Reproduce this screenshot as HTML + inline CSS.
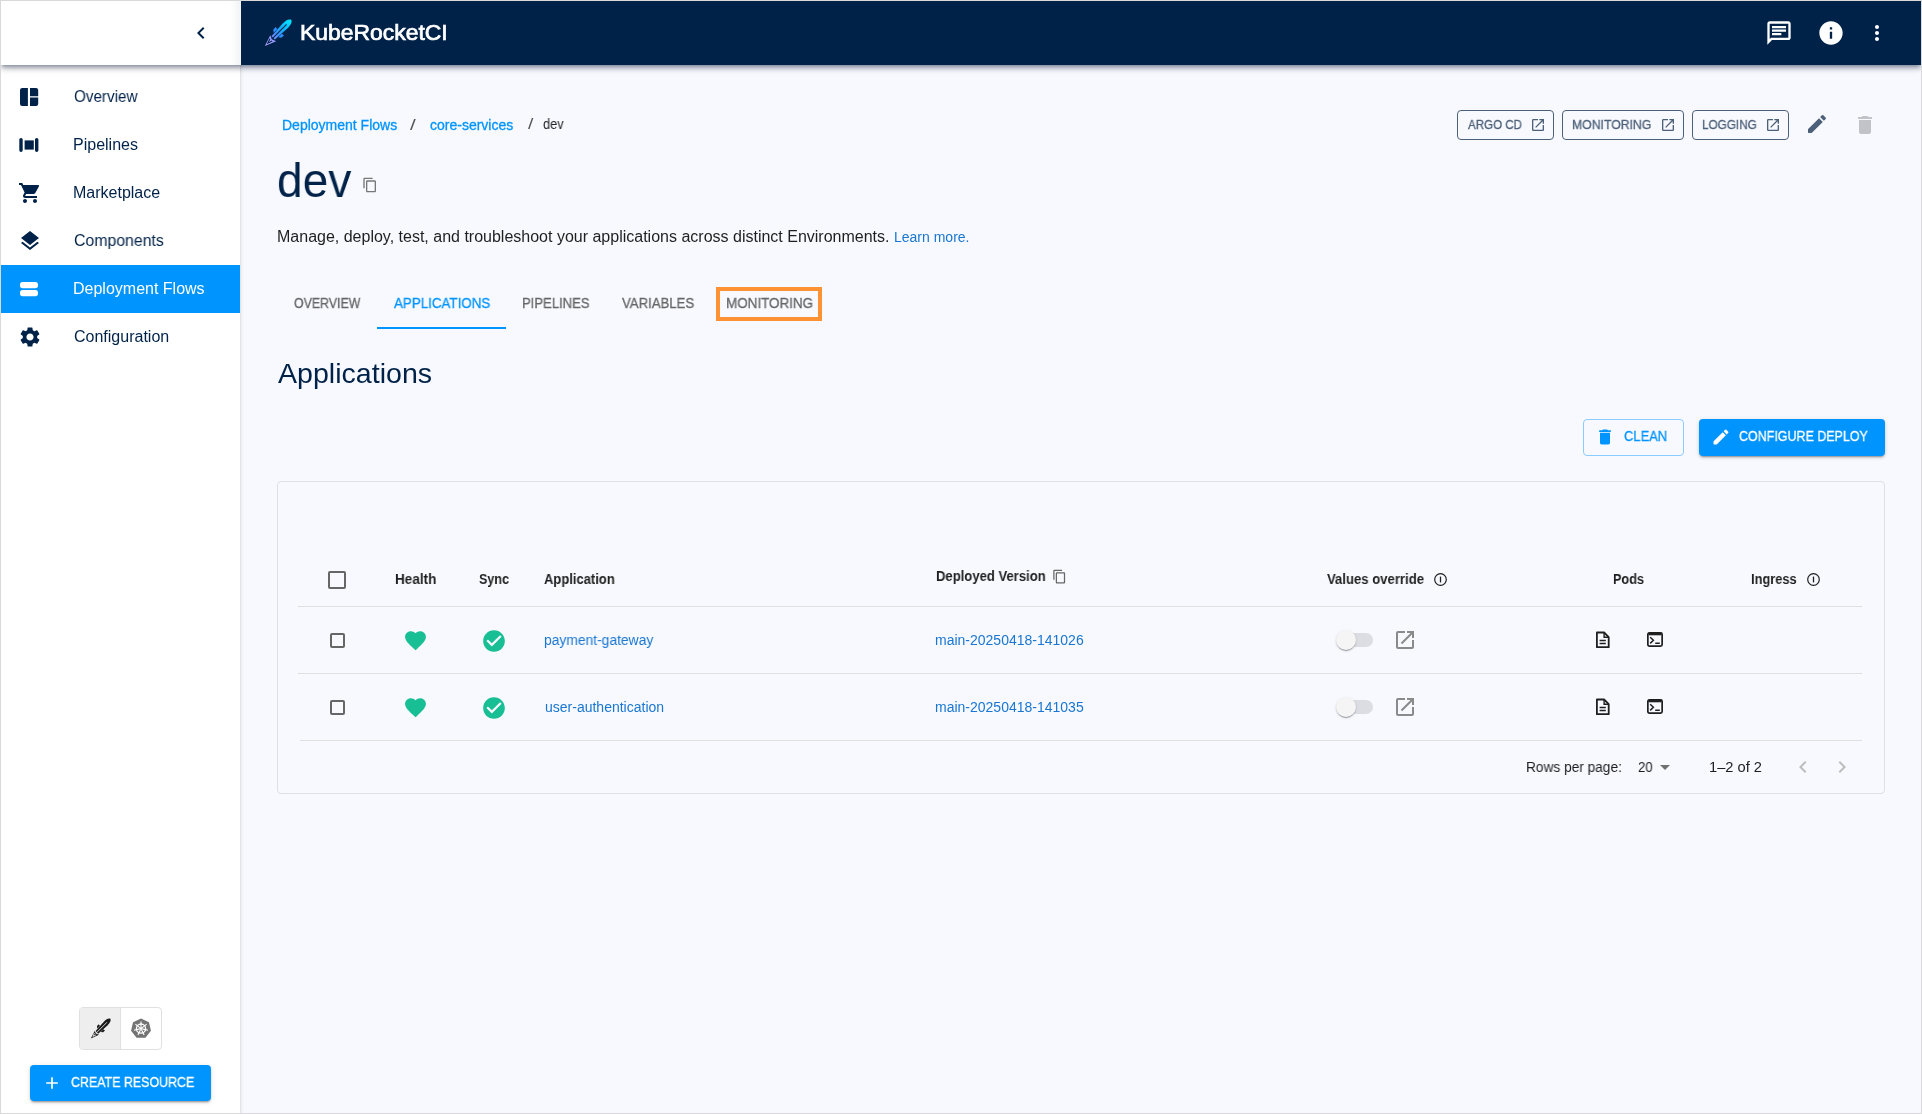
<!DOCTYPE html>
<html><head><meta charset="utf-8"><title>KubeRocketCI - dev</title>
<style>*{box-sizing:border-box;margin:0;padding:0}html,body{width:1922px;height:1114px;overflow:hidden}body{position:relative;background:#f7f9fe;font-family:"Liberation Sans",sans-serif;color:#1f1f1f}.a{position:absolute}svg{display:block}.t{position:absolute;white-space:nowrap;line-height:1;transform-origin:0 0;will-change:transform}</style></head>
<body>
<div class="a" style="left:1px;top:1px;width:1920px;height:64px;background:#012248;box-shadow:0 2px 4px -1px rgba(1,20,50,.35),0 4px 5px 0 rgba(1,20,50,.2),0 1px 10px 0 rgba(1,20,50,.14);z-index:1"></div>
<div class="a" style="left:1px;top:1px;width:240px;height:1112px;background:#fff;border-right:1px solid #e3e4e6;box-shadow:1px 0 3px rgba(0,0,0,.06)"></div>
<div class="a" style="left:1px;top:1px;width:240px;height:64px;background:linear-gradient(to right,#fff 229px,#f3f4f7 239px);z-index:2"></div>
<div class="a" style="left:189px;top:21px;z-index:3"><svg width="24" height="24" viewBox="0 0 24 24"><path fill="#012248" d="M15.41 7.41L14 6l-6 6 6 6 1.41-1.41L10.83 12z"/></svg></div>
<div class="a" style="left:260px;top:16px;z-index:3"><svg width="36" height="34" viewBox="0 0 36 34"><defs><linearGradient id="rb" gradientUnits="userSpaceOnUse" x1="-13" y1="0" x2="13" y2="0"><stop offset="0" stop-color="#7f8cff"/><stop offset=".25" stop-color="#3a92ff"/><stop offset=".55" stop-color="#0db6ff"/><stop offset="1" stop-color="#00eaff"/></linearGradient><linearGradient id="rt" gradientUnits="userSpaceOnUse" x1="-24" y1="0" x2="-13" y2="0"><stop offset="0" stop-color="#b9a3ff"/><stop offset="1" stop-color="#8f98ff"/></linearGradient></defs><g transform="translate(22,13) rotate(-45)"><path fill="url(#rb)" d="M13 0C12 -2.6 9 -3.4 4 -3.4L-12.5 -2.4 -12.5 2.4 4 3.4C9 3.4 12 2.6 13 0Z"/><path fill="#2f8cff" d="M-8.5 -3.2L-6.5 -5.8 -3 -5.8 -3.5 -3.2ZM-8.5 3.2L-6.5 5.8 -3 5.8 -3.5 3.2Z"/><path fill="url(#rt)" d="M-12.8 -3.8L-24.2 0 -12.8 4.6 -14.4 0Z"/><path fill="none" stroke="#012248" stroke-width="1.1" d="M6.5 0L-13 0M-15.5 -1.6L-20 0 -15.5 1.6"/></g></svg></div>
<div class="a" style="left:1765px;top:19px;z-index:3"><svg width="28" height="28" viewBox="0 0 24 24"><path fill="#fff" d="M20 2H4c-1.1 0-1.99.9-1.99 2L2 22l4-4h14c1.1 0 2-.9 2-2V4c0-1.1-.9-2-2-2zm0 14H5.17L4 17.17V4h16v12zM6 12h8v2H6zm0-3h12v2H6zm0-3h12v2H6z"/></svg></div>
<div class="a" style="left:1817px;top:19px;z-index:3"><svg width="28" height="28" viewBox="0 0 24 24"><path fill="#fff" d="M12 2C6.48 2 2 6.48 2 12s4.48 10 10 10 10-4.48 10-10S17.52 2 12 2zm1 15h-2v-6h2v6zm0-8h-2V7h2v2z"/></svg></div>
<div class="a" style="left:1865px;top:21px;z-index:3"><svg width="24" height="24" viewBox="0 0 24 24"><path fill="#fff" d="M12 8c1.1 0 2-.9 2-2s-.9-2-2-2-2 .9-2 2 .9 2 2 2zm0 2c-1.1 0-2 .9-2 2s.9 2 2 2 2-.9 2-2-.9-2-2-2zm0 6c-1.1 0-2 .9-2 2s.9 2 2 2 2-.9 2-2-.9-2-2-2z"/></svg></div>
<div class="a" style="left:1px;top:265px;width:239px;height:48px;background:#0094ff"></div>
<div class="a" style="left:18px;top:85px;"><svg width="24" height="24" viewBox="0 0 24 24"><path fill="#012248" d="M4.2 3H9.9V21H4.2A2.2 2.2 0 0 1 2 18.8V5.2A2.2 2.2 0 0 1 4.2 3zM12 3h6a2.2 2.2 0 0 1 2.2 2.2V11.2H12zM12 12.5h8.2v6.3A2.2 2.2 0 0 1 18 21H12z"/></svg></div>
<div class="a" style="left:18px;top:133px;"><svg width="24" height="24" viewBox="0 0 24 24"><path fill="#012248" d="M6.6 7.4h9.2v9.2H6.6z"/><path stroke="#012248" stroke-width="3.4" stroke-linecap="round" d="M3 6.6v10.7M18.7 6.6v10.7"/></svg></div>
<div class="a" style="left:18px;top:181px;"><svg width="24" height="24" viewBox="0 0 24 24"><path fill="#012248" d="M7 18c-1.1 0-1.99.9-1.99 2S5.9 22 7 22s2-.9 2-2-.9-2-2-2zM1 2v2h2l3.6 7.59-1.35 2.45c-.16.28-.25.61-.25.96 0 1.1.9 2 2 2h12v-2H7.42c-.14 0-.25-.11-.25-.25l.03-.12.9-1.630h7.45c.75 0 1.410-.41 1.75-1.03l3.58-6.49A1.003 1.003 0 0020 4H5.21l-.94-2H1zm16 16c-1.1 0-1.99.9-1.99 2s.89 2 1.99 2 2-.9 2-2-.9-2-2-2z"/></svg></div>
<div class="a" style="left:18px;top:229px;"><svg width="24" height="24" viewBox="0 0 24 24"><path fill="#012248" d="M11.99 18.54l-7.37-5.73L3 14.07l9 7 9-7-1.63-1.27-7.38 5.74zM12 16l7.36-5.73L21 9l-9-7-9 7 1.63 1.27L12 16z"/></svg></div>
<div class="a" style="left:18px;top:277px;"><svg width="24" height="24" viewBox="0 0 24 24"><rect x="2" y="5" width="18" height="6.2" rx="2.6" fill="#fff"/><rect x="2" y="13" width="18" height="6.2" rx="2.6" fill="#fff"/></svg></div>
<div class="a" style="left:18px;top:325px;"><svg width="24" height="24" viewBox="0 0 24 24"><path fill="#012248" d="M19.14 12.94c.04-.3.06-.61.06-.94 0-.32-.02-.64-.07-.94l2.03-1.58a.49.49 0 00.12-.61l-1.92-3.32a.488.488 0 00-.59-.22l-2.39.96c-.5-.38-1.030-.7-1.62-.94l-.36-2.54a.484.484 0 00-.48-.41h-3.84c-.24 0-.43.17-.47.41l-.36 2.54c-.59.24-1.13.57-1.62.94l-2.39-.96c-.22-.08-.47 0-.59.22L2.74 8.87c-.12.21-.08.47.12.61l2.03 1.58c-.05.3-.09.63-.09.94s.02.64.07.94l-2.03 1.58a.49.49 0 00-.12.61l1.92 3.32c.12.22.37.29.59.22l2.39-.96c.5.38 1.03.7 1.62.94l.36 2.54c.05.24.24.41.48.41h3.84c.24 0 .44-.17.47-.41l.36-2.54c.59-.24 1.13-.56 1.62-.94l2.39.96c.22.08.47 0 .59-.22l1.92-3.32c.12-.22.07-.47-.12-.61l-2.01-1.58zM12 15.6c-1.98 0-3.6-1.62-3.6-3.6s1.62-3.6 3.6-3.6 3.6 1.62 3.6 3.6-1.62 3.6-3.6 3.6z"/></svg></div>
<div class="a" style="left:79px;top:1007px;width:83px;height:43px;border:1px solid #e0e0e0;border-radius:4px;overflow:hidden"><div style="position:absolute;left:0;top:0;width:41px;height:41px;background:#eee;border-right:1px solid #e0e0e0"></div><svg style="position:absolute;left:7px;top:8px" width="27" height="25.5" viewBox="0 0 36 34"><g transform="translate(22,13) rotate(-45)">
 <path fill="#1a1a1a" d="M13 0C12 -2.6 9 -3.4 4 -3.4L-12.5 -2.4 -12.5 2.4 4 3.4C9 3.4 12 2.6 13 0Z"/>
 <path fill="#1a1a1a" d="M-8.5 -3.2L-6.5 -5.8 -3 -5.8 -3.5 -3.2ZM-8.5 3.2L-6.5 5.8 -3 5.8 -3.5 3.2Z"/>
 <path fill="#1a1a1a" d="M-12.8 -3.6L-24 0 -12.8 4.4 -14.6 0Z"/>
 <path fill="none" stroke="#eee" stroke-width="1.1" d="M6.5 0L-13 0M-15.5 -1.6L-20 0 -15.5 1.6"/>
</g></svg><svg style="position:absolute;left:51px;top:10px" width="20" height="20" viewBox="0 0 20 20"><polygon fill="#737373" points="10.00,0.40 17.97,4.24 19.94,12.87 14.43,19.79 5.57,19.79 0.06,12.87 2.03,4.24"/><g stroke="#fff" fill="none"><circle cx="10" cy="10.6" r="4.6" stroke-width="1.3"/><path stroke-width="1.1" d="M10.00 9.40L10.00 3.40M10.94 9.85L15.63 6.11M11.17 10.87L17.02 12.20M10.52 11.68L13.12 17.09M9.48 11.68L6.88 17.09M8.83 10.87L2.98 12.20M9.06 9.85L4.37 6.11"/></g><circle cx="10" cy="10.6" r="1.3" fill="#fff"/></svg></div>
<div class="a" style="left:30px;top:1065px;width:181px;height:36px;background:#0094ff;border-radius:4px;box-shadow:0 3px 1px -2px rgba(0,0,0,.2),0 2px 2px 0 rgba(0,0,0,.14),0 1px 5px 0 rgba(0,0,0,.12)"></div>
<div class="a" style="left:42px;top:1073px;"><svg width="20" height="20" viewBox="0 0 24 24"><path fill="#fff" d="M19 13h-6v6h-2v-6H5v-2h6V5h2v6h6v2z"/></svg></div>
<div class="a" style="left:362px;top:177px;"><svg width="16" height="16" viewBox="0 0 24 24"><path fill="#777" d="M16 1H4c-1.1 0-2 .9-2 2v14h2V3h12V1zm3 4H8c-1.1 0-2 .9-2 2v14c0 1.1.9 2 2 2h11c1.1 0 2-.9 2-2V7c0-1.1-.9-2-2-2zm0 16H8V7h11v14z"/></svg></div>
<div class="a" style="left:377px;top:327px;width:129px;height:2px;background:#0094ff"></div>
<div class="a" style="left:716px;top:287px;width:106px;height:34px;border:4px solid #fd9235"></div>
<div class="a" style="left:1457px;top:110px;width:97px;height:30px;border:1px solid #4d6079;border-radius:4px"></div>
<div class="a" style="left:1530px;top:117px;"><svg width="16" height="16" viewBox="0 0 24 24"><path fill="#4d6079" d="M19 19H5V5h7V3H5a2 2 0 0 0-2 2v14a2 2 0 0 0 2 2h14c1.1 0 2-.9 2-2v-7h-2v7zM14 3v2h3.59l-9.83 9.83 1.41 1.41L19 6.41V10h2V3h-7z"/></svg></div>
<div class="a" style="left:1562px;top:110px;width:122px;height:30px;border:1px solid #4d6079;border-radius:4px"></div>
<div class="a" style="left:1660px;top:117px;"><svg width="16" height="16" viewBox="0 0 24 24"><path fill="#4d6079" d="M19 19H5V5h7V3H5a2 2 0 0 0-2 2v14a2 2 0 0 0 2 2h14c1.1 0 2-.9 2-2v-7h-2v7zM14 3v2h3.59l-9.83 9.83 1.41 1.41L19 6.41V10h2V3h-7z"/></svg></div>
<div class="a" style="left:1692px;top:110px;width:97px;height:30px;border:1px solid #4d6079;border-radius:4px"></div>
<div class="a" style="left:1765px;top:117px;"><svg width="16" height="16" viewBox="0 0 24 24"><path fill="#4d6079" d="M19 19H5V5h7V3H5a2 2 0 0 0-2 2v14a2 2 0 0 0 2 2h14c1.1 0 2-.9 2-2v-7h-2v7zM14 3v2h3.59l-9.83 9.83 1.41 1.41L19 6.41V10h2V3h-7z"/></svg></div>
<div class="a" style="left:1805px;top:112px;"><svg width="24" height="24" viewBox="0 0 24 24"><path fill="#4d6079" d="M3 17.46v3.04c0 .28.22.5.5.5h3.04c.13 0 .26-.05.35-.15L17.81 9.94l-3.75-3.75L3.15 17.1c-.1.1-.15.22-.15.36zM20.71 7.04a.996.996 0 0 0 0-1.41l-2.34-2.34a.996.996 0 0 0-1.41 0l-1.83 1.83 3.75 3.75 1.83-1.83z"/></svg></div>
<div class="a" style="left:1853px;top:113px;"><svg width="24" height="24" viewBox="0 0 24 24"><path fill="#c1c3c8" d="M6 19c0 1.1.9 2 2 2h8c1.1 0 2-.9 2-2V7H6v12zM19 4h-3.5l-1-1h-5l-1 1H5v2h14V4z"/></svg></div>
<div class="a" style="left:1583px;top:419px;width:101px;height:37px;border:1px solid #8ccbff;border-radius:4px"></div>
<div class="a" style="left:1595px;top:427px;"><svg width="20" height="20" viewBox="0 0 24 24"><path fill="#0094ff" d="M6 19c0 1.1.9 2 2 2h8c1.1 0 2-.9 2-2V7H6v12zM19 4h-3.5l-1-1h-5l-1 1H5v2h14V4z"/></svg></div>
<div class="a" style="left:1699px;top:419px;width:186px;height:37px;background:#0094ff;border-radius:4px;box-shadow:0 3px 1px -2px rgba(0,0,0,.2),0 2px 2px 0 rgba(0,0,0,.14),0 1px 5px 0 rgba(0,0,0,.12)"></div>
<div class="a" style="left:1711px;top:427px;"><svg width="20" height="20" viewBox="0 0 24 24"><path fill="#fff" d="M3 17.46v3.04c0 .28.22.5.5.5h3.04c.13 0 .26-.05.35-.15L17.81 9.94l-3.75-3.75L3.15 17.1c-.1.1-.15.22-.15.36zM20.71 7.04a.996.996 0 0 0 0-1.41l-2.34-2.34a.996.996 0 0 0-1.41 0l-1.83 1.83 3.75 3.75 1.83-1.83z"/></svg></div>
<div class="a" style="left:277px;top:481px;width:1608px;height:313px;border:1px solid #dfe0e4;border-radius:4px"></div>
<div class="a" style="left:298px;top:606px;width:1564px;height:1px;background:#e0e0e0"></div>
<div class="a" style="left:298px;top:673px;width:1564px;height:1px;background:#e0e0e0"></div>
<div class="a" style="left:300px;top:740px;width:1562px;height:1px;background:#e0e0e0"></div>
<div class="a" style="left:328px;top:571px;width:18px;height:18px;border:2px solid #666;border-radius:2px"></div>
<div class="a" style="left:1052px;top:569px;"><svg width="15" height="15" viewBox="0 0 24 24"><path fill="#666" d="M16 1H4c-1.1 0-2 .9-2 2v14h2V3h12V1zm3 4H8c-1.1 0-2 .9-2 2v14c0 1.1.9 2 2 2h11c1.1 0 2-.9 2-2V7c0-1.1-.9-2-2-2zm0 16H8V7h11v14z"/></svg></div>
<div class="a" style="left:1433px;top:572px;"><svg width="15" height="15" viewBox="0 0 15 15"><circle cx="7.5" cy="7.5" r="5.8" fill="none" stroke="#1f1f1f" stroke-width="1.2"/><path d="M7.5 4.6v5.8" stroke="#1f1f1f" stroke-width="1.3"/></svg></div>
<div class="a" style="left:1806px;top:572px;"><svg width="15" height="15" viewBox="0 0 15 15"><circle cx="7.5" cy="7.5" r="5.8" fill="none" stroke="#1f1f1f" stroke-width="1.2"/><path d="M7.5 4.6v5.8" stroke="#1f1f1f" stroke-width="1.3"/></svg></div>
<div class="a" style="left:330px;top:633px;width:15px;height:15px;border:2px solid #666;border-radius:2px"></div>
<div class="a" style="left:403px;top:628px;"><svg width="25" height="25" viewBox="0 0 24 24"><path fill="#18be94" d="M12 21.35l-1.45-1.32C5.4 15.36 2 12.28 2 8.5 2 5.42 4.42 3 7.5 3c1.74 0 3.41.81 4.5 2.09C13.09 3.81 14.76 3 16.5 3 19.58 3 22 5.42 22 8.5c0 3.78-3.4 6.86-8.55 11.54L12 21.35z"/></svg></div>
<div class="a" style="left:481px;top:628px;"><svg width="26" height="26" viewBox="0 0 24 24"><path fill="#18be94" d="M12 2C6.48 2 2 6.48 2 12s4.48 10 10 10 10-4.48 10-10S17.52 2 12 2zm-2 15l-5-5 1.41-1.41L10 14.17l7.59-7.59L19 8l-9 9z"/></svg></div>
<div class="a" style="left:1339px;top:633px;width:34px;height:14px;border-radius:7px;background:#dcdde3"></div>
<div class="a" style="left:1336px;top:630px;width:20px;height:20px;border-radius:50%;background:#f5f5f5;box-shadow:0 2px 1px -1px rgba(0,0,0,.2),0 1px 1px 0 rgba(0,0,0,.14),0 1px 3px 0 rgba(0,0,0,.12)"></div>
<div class="a" style="left:1393px;top:628px;"><svg width="24" height="24" viewBox="0 0 24 24"><path fill="#8a8a8a" d="M19 19H5V5h7V3H5a2 2 0 0 0-2 2v14a2 2 0 0 0 2 2h14c1.1 0 2-.9 2-2v-7h-2v7zM14 3v2h3.59l-9.83 9.83 1.41 1.41L19 6.41V10h2V3h-7z"/></svg></div>
<div class="a" style="left:1595px;top:631px;"><svg width="16" height="18" viewBox="0 0 16 18"><path fill="none" stroke="#1f1f1f" stroke-width="1.8" stroke-linejoin="round" d="M1.9 1.5h7.2l4.6 4.6v10.1H1.9z"/><path fill="#1f1f1f" d="M8.4 1.5h1.4v4h4v1.4H8.4z"/><path stroke="#1f1f1f" stroke-width="1.5" d="M4.6 9.6h6.2M4.6 12.6h6.2"/></svg></div>
<div class="a" style="left:1646px;top:631px;"><svg width="18" height="17" viewBox="0 0 18 17"><rect x="1.85" y="1.85" width="14.3" height="13.3" rx="1.6" fill="none" stroke="#1f1f1f" stroke-width="1.7"/><path fill="#1f1f1f" d="M2.5 1.5h13v2.8h-13z"/><path fill="none" stroke="#1f1f1f" stroke-width="1.5" d="M4.2 6.2l3.2 3.1-3.2 3.1M9.2 12.2h4.6"/></svg></div>
<div class="a" style="left:330px;top:700px;width:15px;height:15px;border:2px solid #666;border-radius:2px"></div>
<div class="a" style="left:403px;top:695px;"><svg width="25" height="25" viewBox="0 0 24 24"><path fill="#18be94" d="M12 21.35l-1.45-1.32C5.4 15.36 2 12.28 2 8.5 2 5.42 4.42 3 7.5 3c1.74 0 3.41.81 4.5 2.09C13.09 3.81 14.76 3 16.5 3 19.58 3 22 5.42 22 8.5c0 3.78-3.4 6.86-8.55 11.54L12 21.35z"/></svg></div>
<div class="a" style="left:481px;top:695px;"><svg width="26" height="26" viewBox="0 0 24 24"><path fill="#18be94" d="M12 2C6.48 2 2 6.48 2 12s4.48 10 10 10 10-4.48 10-10S17.52 2 12 2zm-2 15l-5-5 1.41-1.41L10 14.17l7.59-7.59L19 8l-9 9z"/></svg></div>
<div class="a" style="left:1339px;top:700px;width:34px;height:14px;border-radius:7px;background:#dcdde3"></div>
<div class="a" style="left:1336px;top:697px;width:20px;height:20px;border-radius:50%;background:#f5f5f5;box-shadow:0 2px 1px -1px rgba(0,0,0,.2),0 1px 1px 0 rgba(0,0,0,.14),0 1px 3px 0 rgba(0,0,0,.12)"></div>
<div class="a" style="left:1393px;top:695px;"><svg width="24" height="24" viewBox="0 0 24 24"><path fill="#8a8a8a" d="M19 19H5V5h7V3H5a2 2 0 0 0-2 2v14a2 2 0 0 0 2 2h14c1.1 0 2-.9 2-2v-7h-2v7zM14 3v2h3.59l-9.83 9.83 1.41 1.41L19 6.41V10h2V3h-7z"/></svg></div>
<div class="a" style="left:1595px;top:698px;"><svg width="16" height="18" viewBox="0 0 16 18"><path fill="none" stroke="#1f1f1f" stroke-width="1.8" stroke-linejoin="round" d="M1.9 1.5h7.2l4.6 4.6v10.1H1.9z"/><path fill="#1f1f1f" d="M8.4 1.5h1.4v4h4v1.4H8.4z"/><path stroke="#1f1f1f" stroke-width="1.5" d="M4.6 9.6h6.2M4.6 12.6h6.2"/></svg></div>
<div class="a" style="left:1646px;top:698px;"><svg width="18" height="17" viewBox="0 0 18 17"><rect x="1.85" y="1.85" width="14.3" height="13.3" rx="1.6" fill="none" stroke="#1f1f1f" stroke-width="1.7"/><path fill="#1f1f1f" d="M2.5 1.5h13v2.8h-13z"/><path fill="none" stroke="#1f1f1f" stroke-width="1.5" d="M4.2 6.2l3.2 3.1-3.2 3.1M9.2 12.2h4.6"/></svg></div>
<div class="a" style="left:1653px;top:755px;"><svg width="24" height="24" viewBox="0 0 24 24"><path fill="#707070" d="M7 10l5 5 5-5z"/></svg></div>
<div class="a" style="left:1791px;top:755px;"><svg width="24" height="24" viewBox="0 0 24 24"><path fill="#bdbdbd" d="M15.41 7.41L14 6l-6 6 6 6 1.41-1.41L10.83 12z"/></svg></div>
<div class="a" style="left:1830px;top:755px;"><svg width="24" height="24" viewBox="0 0 24 24"><path fill="#bdbdbd" d="M10 6L8.59 7.41 13.17 12l-4.58 4.59L10 18l6-6z"/></svg></div>
<div class="t" style="left:73.70px;top:89.10px;font-size:16px;color:#012248;transform:scaleX(0.9505);">Overview</div>
<div class="t" style="left:72.70px;top:137.00px;font-size:16px;color:#012248;">Pipelines</div>
<div class="t" style="left:72.70px;top:185.00px;font-size:16px;color:#012248;">Marketplace</div>
<div class="t" style="left:73.70px;top:233.00px;font-size:16px;color:#012248;transform:scaleX(0.9899);">Components</div>
<div class="t" style="left:72.70px;top:281.00px;font-size:16px;color:#fff;">Deployment Flows</div>
<div class="t" style="left:73.70px;top:329.00px;font-size:16px;color:#012248;">Configuration</div>
<div class="t" style="left:300.01px;top:23.20px;font-size:21.5px;color:#fff;-webkit-text-stroke:0.7px #fff;transform:scaleX(1.0656);z-index:3">KubeRocketCI</div>
<div class="t" style="left:281.95px;top:117.90px;font-size:14px;color:#0094ff;-webkit-text-stroke:0.3px #0094ff;">Deployment Flows</div>
<div class="t" style="left:410.30px;top:117.90px;font-size:14px;color:#555;transform:scaleX(1.4750);">/</div>
<div class="t" style="left:430.15px;top:117.90px;font-size:14px;color:#0094ff;-webkit-text-stroke:0.3px #0094ff;">core-services</div>
<div class="t" style="left:527.80px;top:117.00px;font-size:14px;color:#555;transform:scaleX(1.3750);">/</div>
<div class="t" style="left:542.70px;top:116.80px;font-size:14px;color:#1f1f1f;transform:scaleX(0.9171);">dev</div>
<div class="t" style="left:277.08px;top:157.00px;font-size:48px;color:#012248;transform:scaleX(0.9590);">dev</div>
<div class="t" style="left:276.80px;top:228.90px;font-size:16px;color:#1f1f1f;">Manage, deploy, test, and troubleshoot your applications across distinct Environments.</div>
<div class="t" style="left:894.00px;top:230.00px;font-size:14px;color:#1976d2;">Learn more.</div>
<div class="t" style="left:293.73px;top:296.40px;font-size:14px;color:#666;-webkit-text-stroke:0.3px #666;transform:scaleX(0.8822);">OVERVIEW</div>
<div class="t" style="left:394.14px;top:296.40px;font-size:14px;color:#0094ff;-webkit-text-stroke:0.3px #0094ff;transform:scaleX(0.9540);">APPLICATIONS</div>
<div class="t" style="left:521.96px;top:296.40px;font-size:14px;color:#666;-webkit-text-stroke:0.3px #666;transform:scaleX(0.9330);">PIPELINES</div>
<div class="t" style="left:622.34px;top:296.40px;font-size:14px;color:#666;-webkit-text-stroke:0.3px #666;transform:scaleX(0.9396);">VARIABLES</div>
<div class="t" style="left:726.08px;top:296.40px;font-size:14px;color:#666;-webkit-text-stroke:0.3px #666;transform:scaleX(0.9602);">MONITORING</div>
<div class="t" style="left:277.50px;top:359.90px;font-size:28px;color:#012248;transform:scaleX(1.0208);">Applications</div>
<div class="t" style="left:1467.83px;top:117.80px;font-size:13px;color:#4d6079;-webkit-text-stroke:0.3px #4d6079;transform:scaleX(0.8897);">ARGO CD</div>
<div class="t" style="left:1572.00px;top:117.80px;font-size:13px;color:#4d6079;-webkit-text-stroke:0.3px #4d6079;transform:scaleX(0.9407);">MONITORING</div>
<div class="t" style="left:1701.83px;top:117.80px;font-size:13px;color:#4d6079;-webkit-text-stroke:0.3px #4d6079;transform:scaleX(0.9037);">LOGGING</div>
<div class="t" style="left:1623.84px;top:429.40px;font-size:14px;color:#0094ff;-webkit-text-stroke:0.3px #0094ff;transform:scaleX(0.9243);">CLEAN</div>
<div class="t" style="left:1739.13px;top:429.40px;font-size:14px;color:#fff;-webkit-text-stroke:0.3px #fff;transform:scaleX(0.8905);">CONFIGURE DEPLOY</div>
<div class="t" style="left:71.13px;top:1075.40px;font-size:14px;color:#fff;-webkit-text-stroke:0.3px #fff;transform:scaleX(0.8867);">CREATE RESOURCE</div>
<div class="t" style="left:395.20px;top:572.20px;font-size:14px;font-weight:700;color:#1f1f1f;transform:scaleX(0.9660);">Health</div>
<div class="t" style="left:478.70px;top:572.00px;font-size:14px;font-weight:700;color:#1f1f1f;transform:scaleX(0.8968);">Sync</div>
<div class="t" style="left:544.30px;top:572.00px;font-size:14px;font-weight:700;color:#1f1f1f;transform:scaleX(0.9277);">Application</div>
<div class="t" style="left:935.90px;top:568.80px;font-size:14px;font-weight:700;color:#1f1f1f;transform:scaleX(0.9330);">Deployed Version</div>
<div class="t" style="left:1327.30px;top:571.80px;font-size:14px;font-weight:700;color:#1f1f1f;transform:scaleX(0.9372);">Values override</div>
<div class="t" style="left:1613.40px;top:571.90px;font-size:14px;font-weight:700;color:#1f1f1f;transform:scaleX(0.9030);">Pods</div>
<div class="t" style="left:1751.40px;top:572.00px;font-size:14px;font-weight:700;color:#1f1f1f;transform:scaleX(0.9157);">Ingress</div>
<div class="t" style="left:544.40px;top:632.70px;font-size:14px;color:#1976d2;transform:scaleX(0.9891);">payment-gateway</div>
<div class="t" style="left:935.00px;top:632.70px;font-size:14px;color:#1976d2;">main-20250418-141026</div>
<div class="t" style="left:544.70px;top:699.80px;font-size:14px;color:#1976d2;">user-authentication</div>
<div class="t" style="left:935.00px;top:699.80px;font-size:14px;color:#1976d2;">main-20250418-141035</div>
<div class="t" style="left:1525.52px;top:759.90px;font-size:14px;color:#1f1f1f;transform:scaleX(0.9775);">Rows per page:</div>
<div class="t" style="left:1638.10px;top:759.90px;font-size:14px;color:#1f1f1f;transform:scaleX(0.9439);">20</div>
<div class="t" style="left:1708.75px;top:759.90px;font-size:14px;color:#1f1f1f;transform:scaleX(1.0479);">1–2 of 2</div>
<div class="a" style="left:0px;top:0px;width:1922px;height:1114px;border:1px solid #d9d9d9;z-index:10"></div>
</body></html>
